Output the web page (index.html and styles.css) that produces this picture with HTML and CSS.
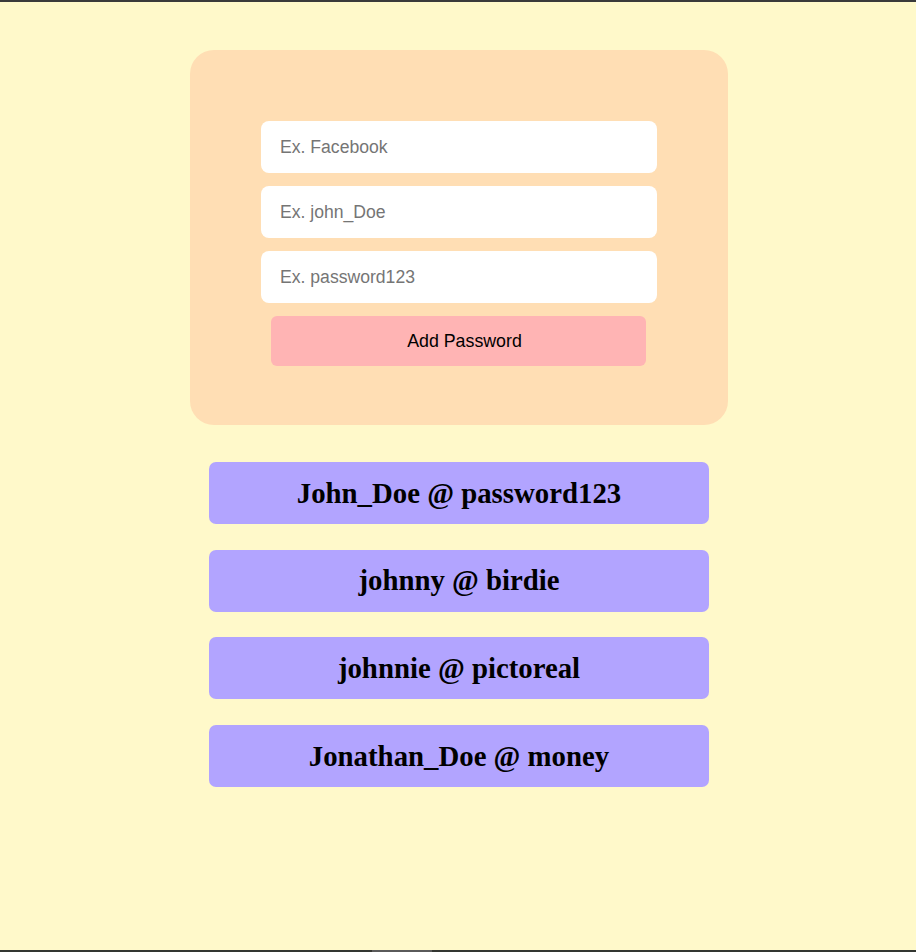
FILE: index.html
```html
<!DOCTYPE html>
<html lang="en">
<head>
    <meta charset="UTF-8">
    <meta name="viewport" content="width=device-width, initial-scale=1.0">
    <title>Password Manager</title>
    <link rel="stylesheet" href="styles.css">
</head>
<body>
    <div class="page">
        <div class="container">
            <div class="form">
                <input type="text" id="site" placeholder="Ex. Facebook">
                <input type="text" id="username" placeholder="Ex. john_Doe">
                <input type="text" id="password" placeholder="Ex. password123">
                <button id="addPassword">Add Password</button>
            </div>
        </div>

        <div class="list" id="list">
            <h2 class="entry">John_Doe @ password123</h2>
            <h2 class="entry">johnny @ birdie</h2>
            <h2 class="entry">johnnie @ pictoreal</h2>
            <h2 class="entry">Jonathan_Doe @ money</h2>
        </div>
    </div>
    <div class="bottom-bar"><span class="handle"></span></div>
</body>
</html>
```

FILE: styles.css
```css
html, body {
    margin: 0;
    padding: 0;
}

body {
    background-color: #FFF9CA;
    border-top: 2px solid #3a3a3a;
    height: 952px;
    box-sizing: border-box;
    display: flex;
    flex-direction: column;
    overflow: hidden;
}

.page {
    flex: 1;
    display: flex;
    flex-direction: column;
    align-items: center;
    padding-left: 2px;
}

.container {
    width: 538px;
    box-sizing: border-box;
    margin-top: 48px;
    padding: 71px 71px 59px;
    background: #FFDEB4;
    border-radius: 24px;
}

.form {
    display: flex;
    flex-direction: column;
    align-items: stretch;
    gap: 13px;
}

.form input {
    width: 100%;
    box-sizing: border-box;
    height: 52px;
    padding: 0 19px;
    font-family: "Liberation Sans", Arial, sans-serif;
    font-size: 17.6px;
    border: none;
    border-radius: 8px;
    background: #fff;
    color: #000;
    outline: none;
}

.form input::placeholder {
    color: #757575;
}

.form button {
    width: 375px;
    height: 50px;
    margin-left: 10px;
    padding: 0 0 0 12px;
    font-family: "Liberation Sans", Arial, sans-serif;
    font-size: 17.8px;
    color: #000;
    background: #FFB4B4;
    border: none;
    border-radius: 6px;
    cursor: pointer;
}

.list {
    margin-top: 37px;
    display: flex;
    flex-direction: column;
    gap: 25.7px;
}

.entry {
    width: 500px;
    height: 62px;
    margin: 0;
    display: flex;
    align-items: center;
    justify-content: center;
    background: #B2A4FF;
    border-radius: 7px;
    font-family: "Liberation Serif", "Times New Roman", serif;
    font-size: 28.8px;
    font-weight: bold;
}

.bottom-bar {
    height: 2px;
    background: #333631;
    position: relative;
}

.bottom-bar .handle {
    position: absolute;
    left: 372px;
    width: 60px;
    height: 2px;
    background: #5a5a5a;
}
```
